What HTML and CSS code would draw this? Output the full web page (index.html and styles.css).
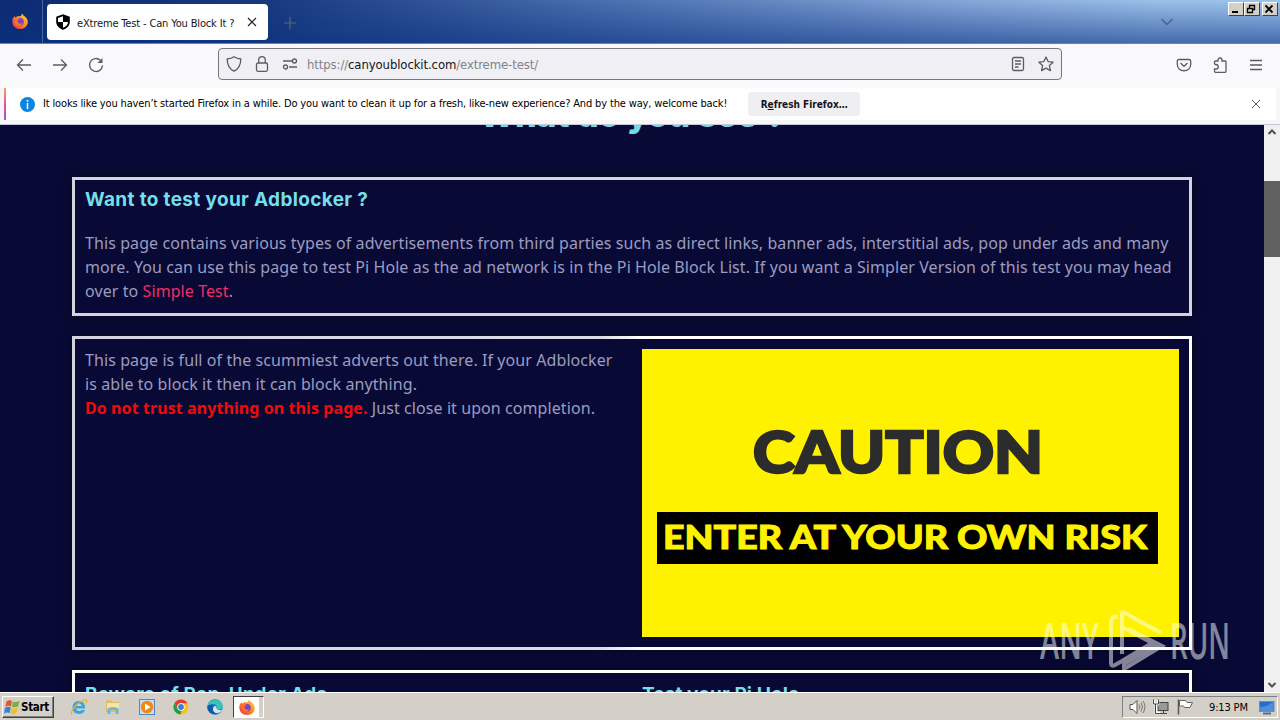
FILE: index.html
```
<!DOCTYPE html>
<html lang="en">
<head>
    <meta charset="UTF-8">
    <title>eXtreme Test - Can You Block It ?</title>
    <link rel="stylesheet" href="styles.css">
</head>
<body>
    <div class="screen">
        <div class="titlebar">
            <div class="fx-view">
                <svg width="18" height="18" viewBox="0 0 18 18"><use href="#firefox"/></svg>
            </div>
            <div class="tab">
                <svg width="16" height="16" viewBox="0 0 16 16">
                    <path d="M8 .3 14.8 2.8V8c0 3.8-3 6.400-6.800 7.800C4.200 14.400 1.200 11.800 1.200 8V2.800z" fill="#000"/>
                    <path d="M8 2.300V8H3V4.100zM8 8h5c0 2.800-2 4.700-5 5.800z" fill="#fff"/>
                </svg>
                <span class="tab-title">eXtreme Test - Can You Block It ?</span>
                <svg class="tab-close" width="10" height="10" viewBox="0 0 10 10"><path d="M1 1l8 8M9 1l-8 8" stroke="#222" stroke-width="1.200"/></svg>
            </div>
            <svg class="new-tab" width="12" height="12" viewBox="0 0 12 12"><path d="M6 0v12M0 6h12" stroke="#586576" stroke-width="1.200"/></svg>
            <svg class="all-tabs" width="14" height="8" viewBox="0 0 14 8"><path d="M1.500 1 7 6.500 12.500 1" fill="none" stroke="#48648f" stroke-width="1.500"/></svg>
            <div class="controls">
                <button class="ctl"><svg width="12" height="10" viewBox="0 0 12 10"><path d="M3 8h6" stroke="#000" stroke-width="2"/></svg></button>
                <button class="ctl ctl-restore"><svg width="12" height="10" viewBox="0 0 12 10"><path d="M4.500 4V1.500h5v4H7.500M4 1.500h6M2.500 4.500h5v4h-5zM2 4.500h6" fill="none" stroke="#000" stroke-width="1.300"/></svg></button>
                <button class="ctl"><svg width="12" height="10" viewBox="0 0 12 10"><path d="M2.500 1.500l7 7M9.500 1.500l-7 7" stroke="#000" stroke-width="1.800"/></svg></button>
            </div>
        </div>

        <div class="toolbar">
            <div class="nav">
                <svg width="16" height="16" viewBox="0 0 16 16"><path d="M15 8H1.500M7 2.500 1.500 8 7 13.500"/></svg>
                <svg width="16" height="16" viewBox="0 0 16 16"><path d="M1 8h13.500M9 2.500 14.500 8 9 13.500"/></svg>
                <svg width="16" height="16" viewBox="0 0 16 16"><path d="M12.600 3.400a6.500 6.500 0 1 0 1.900 5"/><path d="M14.500 1v5h-5z" fill="#5b5b66" stroke="none"/></svg>
            </div>
            <div class="urlbar">
                <svg width="16" height="16" viewBox="0 0 16 16"><path d="M8 .8c2 1.400 4.200 2 6.800 2.200 0 6.300-1.800 9.800-6.800 12.200C3 12.800 1.200 9.300 1.200 3 3.800 2.800 6 2.200 8 .8z"/></svg>
                <svg width="16" height="16" viewBox="0 0 16 16"><rect x="2.500" y="7" width="11" height="8.300" rx="1.500"/><path d="M4.700 7V4a3.300 3.300 0 0 1 6.600 0v3"/></svg>
                <svg width="16" height="16" viewBox="0 0 16 16"><path d="M1 5h9M7 11h8"/><circle cx="12.500" cy="5" r="2"/><circle cx="3.500" cy="11" r="2"/></svg>
                <span class="url">https://<b>canyoublockit.com</b>/extreme-test/</span>
                <svg width="16" height="16" viewBox="0 0 16 16"><rect x="2.500" y="1.500" width="11" height="13" rx="1.500"/><path d="M5 5h6M5 8h6M5 11h3.500"/></svg>
                <svg width="16" height="16" viewBox="0 0 16 16"><path d="M8 1l2.100 4.600 5 .6-3.700 3.400 1 5L8 12.100l-4.400 2.500 1-5L.9 6.200l5-.6z" stroke-linejoin="round"/></svg>
            </div>
            <div class="tools">
                <svg width="16" height="16" viewBox="0 0 16 16"><path d="M3 2.500h10q1.700 0 1.700 1.700V7.500c0 8.300-13.400 8.300-13.400 0V4.200Q1.300 2.500 3 2.500z"/><path d="M4.500 6 8 9.300 11.500 6"/></svg>
                <svg width="16" height="16" viewBox="0 0 16 16"><path d="M2.500 7.200V5q0-1 1-1H6V3a2 2 0 0 1 4 0v1h3q1 0 1 1v9.300q0 1-1 1H3.500q-1 0-1-1V12H4a2 2 0 0 0 0-4.500H2.500"/></svg>
                <svg width="16" height="16" viewBox="0 0 16 16"><path d="M2 3.500h12M2 8h12M2 12.500h12"/></svg>
            </div>
        </div>

        <div class="notice">
            <div class="notice-box">
                <svg class="info" width="15" height="15" viewBox="0 0 15 15"><circle cx="7.500" cy="7.500" r="7.500" fill="#0a84e0"/><path d="M7.500 3v1.700M7.500 6v6" stroke="#fff" stroke-width="1.500"/></svg>
                <span class="notice-text">It looks like you haven’t started Firefox in a while. Do you want to clean it up for a fresh, like-new experience? And by the way, welcome back!</span>
                <button class="refresh">R<u>e</u>fresh Firefox…</button>
                <svg class="notice-close" width="10" height="10" viewBox="0 0 10 10"><path d="M1 1l8 8M9 1l-8 8" stroke="#5b5b66"/></svg>
            </div>
        </div>

        <div class="viewport">
            <main class="page">
                <h1>What do you see ?</h1>
                <section class="card card-intro">
                    <h2>Want to test your Adblocker ?</h2>
                    <p>This page contains various types of advertisements from third parties such as direct links, banner ads, interstitial ads, pop under ads and many<br>more. You can use this page to test Pi Hole as the ad network is in the Pi Hole Block List. If you want a Simpler Version of this test you may head<br>over to <a>Simple Test</a>.</p>
                </section>
                <section class="card card-caution">
                    <p>This page is full of the scummiest adverts out there. If your Adblocker<br>is able to block it then it can block anything.<br><strong>Do not trust anything on this page.</strong> Just close it upon completion.</p>
                    <svg class="caution" width="537" height="288" viewBox="0 0 537 288">
                        <rect width="537" height="288" fill="#fff200"/>
                        <text x="111" y="124" textLength="290" lengthAdjust="spacingAndGlyphs" class="caution-title">CAUTION</text>
                        <rect x="15" y="163" width="501" height="52" fill="#000"/>
                        <text x="21" y="200" textLength="484" lengthAdjust="spacingAndGlyphs" class="caution-sub">ENTER AT YOUR OWN RISK</text>
                    </svg>
                </section>
                <section class="card card-split">
                    <h2>Beware of Pop-Under Ads</h2>
                    <h2>Test your Pi Hole</h2>
                </section>
            </main>
            <div class="scrollbar">
                <svg width="10" height="6" viewBox="0 0 10 6"><path d="M1.500 5 5 1.500 8.500 5" fill="none" stroke="#505050" stroke-width="2"/></svg>
                <div class="thumb"></div>
                <svg class="down" width="10" height="6" viewBox="0 0 10 6"><path d="M1.500 1 5 4.500 8.500 1" fill="none" stroke="#505050" stroke-width="2"/></svg>
            </div>
        </div>

        <div class="taskbar">
            <button class="start">
                <svg width="16" height="16" viewBox="0 0 16 16">
                    <path d="M2.500 2.500Q5 .5 8 2L7 7.500Q4 6 1.300 8z" fill="#e4582b"/>
                    <path d="M9 2.400q3 1.400 6.500-.4L14 7.500q-3 1.500-6 .3z" fill="#76b043"/>
                    <path d="M1 9q3-2 5.800-.5L5.700 14Q3 12.600 0 14.400z" fill="#3b82cf"/>
                    <path d="M7.800 9q3 1.200 6-.3L12.500 14q-3 1.600-5.800.4z" fill="#f6bd27"/>
                </svg>Start
            </button>
            <div class="quick">
                <svg width="18" height="18" viewBox="0 0 18 18">
                    <path d="M15.200 10.500H6q.5 2.500 3.200 2.500 1.700 0 2.500-1.100h3.200Q13.700 16 9 16 2.500 15.700 2.500 9.500 2.800 3.300 9 3q6.300.4 6.200 7.500zM6 8h5.800Q11.300 5.800 9 5.800 6.700 5.900 6 8z" fill="#37a5de"/>
                    <path d="M2 16.500C-.5 13 9 3 15 1.800c2.500-.3 1.800 2.200 1 3.600" fill="none" stroke="#e3b43c" stroke-width="1.300"/>
                </svg>
                <svg width="18" height="18" viewBox="0 0 18 18">
                    <path d="M2 4V2.500h5L8.500 4H15v10H2z" fill="#dfbd61"/><path d="M3 5h12v7H3z" fill="#f7e4a0"/><path d="M3.500 16v-5.500q5.500-3 11 0V16h-3v-4h-5v4z" fill="#71b5d9"/>
                </svg>
                <svg width="18" height="18" viewBox="0 0 18 18">
                    <rect x="1.500" y="1.500" width="15" height="15" fill="#c3ddf1" stroke="#5289bb"/><circle cx="9" cy="9" r="6.200" fill="#f08717"/><path d="M7 5.500 12.500 9 7 12.500z" fill="#fff"/>
                </svg>
                <svg width="18" height="18" viewBox="0 0 18 18">
                    <circle cx="9" cy="9" r="7.500" fill="#fbc116"/><path d="M2.500 5.200A7.500 7.500 0 0 1 15.500 5.300H9a3.700 3.700 0 0 0-3.300 5.400z" fill="#e23c2f"/><path d="M2.500 5.200 5.800 11A3.700 3.700 0 0 0 10 12.600L8.300 16.500A7.500 7.500 0 0 1 2.500 5.200z" fill="#27994a"/><circle cx="9" cy="9" r="3.700" fill="#fff"/><circle cx="9" cy="9" r="2.900" fill="#377ee0"/>
                </svg>
                <svg width="18" height="18" viewBox="0 0 18 18">
                    <circle cx="9" cy="9" r="7.700" fill="#1676c5"/><path d="M1.500 8C3 0 14.500-.5 16.700 8c.4 4-4.800 4.300-6.200 2.600C12 6 6.500 4.500 1.500 8z" fill="#37c5b5"/><path d="M10.500 10.600c1.400 1.900 4 1.900 5.500 1.200-1.500 4-8.500 5-9 0-.2-2 .7-3.300 2-3.800 1.300.3 1.800 1.300 1.500 2.600z" fill="#d4e8ec"/><path d="M7 8.500c-2 5 3 8.500 7 6C8 18 .5 14.500 1.500 8.500 3 6.500 5.500 6.700 7 8.500z" fill="#1559a6"/>
                </svg>
            </div>
            <div class="task-active">
                <svg width="18" height="18" viewBox="0 0 18 18"><use href="#firefox"/></svg>
            </div>
            <div class="tray">
                <svg width="18" height="18" viewBox="0 0 18 18"><path d="M2 6.500h3L9 2.500v13l-4-4H2z" fill="#fff" stroke="#555"/><path d="M11 6.500q1.700 2.500 0 5M13 4.500q3 4.500 0 9M15 3q4 6 0 12" fill="none" stroke="#777"/></svg>
                <svg width="18" height="18" viewBox="0 0 18 18"><rect x="6" y="4.500" width="10" height="8" fill="#999" stroke="#444"/><path d="M8 15.500h7M11.500 12.500v3" stroke="#444"/><path d="M2 2v4h4V2M4 6v9h4" fill="none" stroke="#fff" stroke-width="2.500"/><path d="M1.500 1.500v4.500h5V1.500M3.500 6v9.500H8" fill="none" stroke="#444"/></svg>
                <svg width="18" height="18" viewBox="0 0 18 18"><path d="M3.500 2.500h6l1.500 2h5.500L14 9.500H8.500l-1-1.500h-4z" fill="#fff" stroke="#666"/><path d="M2.500 1.500v15" stroke="#555" stroke-width="1.500"/></svg>
                <span class="clock">9:13 PM</span>
                <svg width="16" height="15" viewBox="0 0 16 15"><rect x=".5" y="1.500" width="14.500" height="10" fill="#2470c8" stroke="#6d8fb6"/><path d="M1 11V7q7 0 13-5v9z" fill="#4f8fd9"/><path d="M4 13.500h8" stroke="#526e8d" stroke-width="2"/></svg>
            </div>
        </div>

        <svg class="watermark" width="194" height="64" viewBox="0 0 194 64">
            <text x="2" y="51" textLength="59" lengthAdjust="spacingAndGlyphs">ANY</text>
            <text x="132" y="51" textLength="60" lengthAdjust="spacingAndGlyphs">RUN</text>
            <path d="M80 9q-7-1-7 5v41q0 4 4 2l7-4M84 46V6q0-3 3-1l36 20M90 21l34 17-38 23v-5l32-19-34-18M84 53l30-18"/>
        </svg>
    </div>

    <svg class="defs" width="0" height="0">
        <defs>
            <linearGradient id="flame" x1="1" y1="0" x2="0" y2="1">
                <stop offset="0" stop-color="#ffe34b"/><stop offset=".45" stop-color="#ff8a1e"/><stop offset="1" stop-color="#f0265b"/>
            </linearGradient>
            <symbol id="firefox" viewBox="0 0 18 18">
                <path d="M11 1.500q1.200 2 3.500 3.500 3 3 2 7-1.800 5-7.500 5Q2 16.500 1.300 10q0-4 2.200-6 .3 1 1 1.500Q5.500 4.500 7 4q3.500 1 4-2.500z" fill="url(#flame)"/>
                <circle cx="9" cy="9.800" r="3.800" fill="#7a42c9"/>
                <path d="M4.500 7q2-2 4.500.3-3 .2-2.500 2.700 1.500 3 5 1-2 4-6 2Q3 11 4.500 7z" fill="#ff761d"/>
            </symbol>
        </defs>
    </svg>
</body>
</html>
```
FILE: styles.css
```
* {
    box-sizing: border-box;
}
body {
    margin: 0;
    font-family: "DejaVu Sans Condensed", "DejaVu Sans", sans-serif;
    font-size: 11px;
    overflow: hidden;
}
svg {
    display: block;
    flex: none;
}
button {
    padding: 0;
    font-family: inherit;
}
.screen {
    position: relative;
    display: flex;
    flex-direction: column;
    width: 1280px;
    height: 720px;
    overflow: hidden;
}

/* title bar */
.titlebar {
    display: flex;
    height: 44px;
    flex: none;
    background: linear-gradient(to bottom, rgba(10, 50, 130, 0), rgba(10, 50, 130, .6)), linear-gradient(to right, #0c2a72 0, #19397f 270px, #4a6fae 600px, #84a5d8 950px, #9cc1ea 1160px, #9cc4ee 1280px);
    border-bottom: 1px solid #75829c;
}
.fx-view {
    width: 43px;
    padding: 12px 0 0 11px;
    border-right: 1px solid #4c669b;
}
.tab {
    display: flex;
    align-items: center;
    width: 221px;
    height: 36px;
    margin: 4px 0 0 4px;
    padding: 0 11px 0 8px;
    background: #fff;
    border-radius: 4px;
}
.tab-title {
    margin: 2px 0 0 6px;
    white-space: nowrap;
    color: #15141a;
    letter-spacing: -.15px;
}
.tab-close {
    margin-left: auto;
}
.new-tab {
    margin: 17px 0 0 16px;
}
.all-tabs {
    margin: 18px 54px 0 auto;
}
.controls {
    display: flex;
    padding: 2px 2px 0 0;
}
.ctl {
    width: 16px;
    height: 14px;
    background: #d4d0c8;
    border: 1px solid;
    border-color: #fff #404040 #404040 #fff;
}
.ctl-restore {
    margin-right: 2px;
}

/* navigation */
.toolbar {
    display: flex;
    align-items: center;
    height: 44px;
    flex: none;
    padding: 0 16px;
    background: #f9f9fb;
}
.toolbar svg {
    fill: none;
    stroke: #5b5b66;
    stroke-width: 1.3;
}
.nav {
    display: flex;
    gap: 20px;
    width: 202px;
    margin-top: -2px;
}
.urlbar {
    display: flex;
    align-items: center;
    gap: 12px;
    width: 844px;
    height: 32px;
    margin-top: -4px;
    padding: 0 7px;
    background: #f0f0f4;
    border: 1px solid #77777f;
    border-radius: 4px;
}
.url {
    flex: 1;
    margin-left: -3px;
    font-size: 13px;
    letter-spacing: -.11px;
    color: #82828a;
    white-space: nowrap;
}
.url b {
    font-weight: normal;
    color: #15141a;
}
.tools {
    display: flex;
    gap: 20px;
    margin: -3px 0 0 auto;
}

/* notification bar */
.notice {
    height: 37px;
    flex: none;
    padding-right: 4px;
    background: #f6f6f8;
    border-bottom: 1px solid #c6c9dc;
}
.notice-box {
    display: flex;
    align-items: center;
    height: 32px;
    margin-left: 4px;
    padding: 0 15px 0 14px;
    background: #fff;
    border-left: 2px solid;
    border-image: linear-gradient(#ffa36c, #e8519c, #9059d4) 1;
}
.notice-text {
    margin: -2px 0 0 8px;
    white-space: nowrap;
    letter-spacing: -.147px;
}
.refresh {
    width: 112px;
    height: 24px;
    margin-left: 21px;
    font-size: 10px;
    font-weight: bold;
    color: #15141a;
    background: #efeff1;
    border: 0;
    border-radius: 4px;
}
.notice-close {
    margin-left: auto;
}

/* page */
.viewport {
    display: flex;
    height: 567px;
    flex: none;
    overflow: hidden;
}
.page {
    flex: 1;
    padding: 0 72px;
    background: #080a35;
    color: #9c9cc0;
    font-family: "Noto Sans", sans-serif;
    font-size: 16px;
    line-height: 23.8px;
}
h1 {
    height: 40px;
    margin: -30px 0 42px;
    font-family: Inter, sans-serif;
    font-size: 34px;
    font-weight: 800;
    line-height: 40px;
    text-align: center;
    color: #72d9e6;
}
h2 {
    margin: 0;
    font-family: Inter, sans-serif;
    font-size: 19px;
    font-weight: 700;
    line-height: 24px;
    letter-spacing: .1px;
    color: #72dfea;
}
p {
    margin: 0;
    white-space: nowrap;
    letter-spacing: .082px;
}
a {
    color: #f52c63;
}
strong {
    color: #f00a0a;
}
.card {
    margin-bottom: 20px;
    padding: 10px;
    border: 3px solid #d4d3df;
    box-shadow: 0 0 10px rgba(0, 0, 0, .5);
}
.card-intro {
    height: 139px;
    padding-top: 8px;
}
.card-intro h2 {
    letter-spacing: .34px;
}
.card-intro p {
    margin-top: 20px;
}
.card-caution {
    display: grid;
    grid-template-columns: 537px 537px;
    gap: 20px;
    height: 314px;
    border-image: linear-gradient(to right, #d4d3df 0, #dddde6 530px, #fff 570px) 3;
}
.caution {
    font-family: Lato, sans-serif;
    font-weight: 900;
}
.caution-title {
    font-size: 58px;
    fill: #2c2c2c;
    stroke: #2c2c2c;
    stroke-width: 2.5;
}
.caution-sub {
    font-size: 33px;
    fill: #fff200;
    stroke: #fff200;
    stroke-width: 1;
}
.card-split {
    display: grid;
    grid-template-columns: 537px 537px;
    gap: 20px;
    height: 120px;
    border-color: #fff;
}
.scrollbar {
    display: flex;
    flex-direction: column;
    align-items: center;
    width: 16px;
    padding: 4px 0;
    background: #f0f0f0;
}
.thumb {
    width: 16px;
    height: 76px;
    margin-top: 46px;
    background: #606060;
}
.down {
    margin-top: auto;
}

/* taskbar */
.taskbar {
    display: flex;
    align-items: center;
    height: 28px;
    flex: none;
    padding: 1px 2px 0;
    background: #d4d0c8;
    border-top: 1px solid #fff;
}
.start {
    display: flex;
    align-items: center;
    gap: 1px;
    width: 52px;
    height: 22px;
    padding-left: 1px;
    font-size: 11.5px;
    font-weight: bold;
    letter-spacing: -.3px;
    background: #d4d0c8;
    border: 1px solid;
    border-color: #fff #404040 #404040 #fff;
    box-shadow: inset -1px -1px #808080;
}
.quick {
    display: flex;
    gap: 16px;
    margin-left: 16px;
}
.task-active {
    width: 31px;
    height: 22px;
    margin-left: 9px;
    padding: 1px 0 0 4px;
    background: #fff;
    border: 1px solid;
    border-color: #404040 #fff #fff #404040;
    box-shadow: inset -4px 0 #d4d0c8;
}
.tray {
    display: flex;
    align-items: center;
    gap: 6px;
    width: 156px;
    height: 22px;
    margin-left: auto;
    padding-left: 5px;
    border: 1px solid;
    border-color: #808080 #fff #fff #808080;
}
.clock {
    width: 44px;
    margin-left: 9px;
    white-space: nowrap;
    letter-spacing: -.15px;
}

.watermark {
    position: absolute;
    left: 1038px;
    top: 608px;
    opacity: .5;
    fill: #fff;
    font-family: "Open Sans", sans-serif;
    font-size: 50px;
    font-weight: 600;
}
.watermark path {
    fill: none;
    stroke: #fff;
    stroke-width: 4;
}
.defs {
    position: absolute;
}
```
